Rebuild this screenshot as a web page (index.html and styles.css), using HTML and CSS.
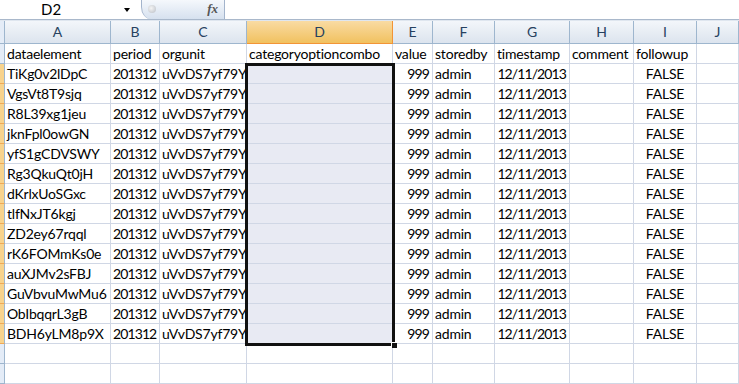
FILE: index.html
```html
<!DOCTYPE html>
<html lang="en">
<head>
    <meta charset="UTF-8">
    <meta name="viewport" content="width=device-width, initial-scale=1.0">
    <link rel="stylesheet" href="styles.css">
</head>
<body>
    <div class="topbar">
        <div class="namebox">D2</div>
        <div class="namebox-arrow"></div>
        <div class="fx-pill">
            <span class="knob"></span>
            <span class="fx">fx</span>
        </div>
        <div class="formula"></div>
    </div>
    <div class="sheet">
        <div class="row head">
            <div class="rh"></div>
            <div class="ch">A</div><div class="ch">B</div><div class="ch">C</div>
            <div class="ch active">D</div><div class="ch">E</div><div class="ch">F</div>
            <div class="ch">G</div><div class="ch">H</div><div class="ch">I</div><div class="ch">J</div>
        </div>
        <div class="row">
            <div class="rh"></div>
            <div class="c">dataelement</div><div class="c">period</div><div class="c">orgunit</div>
            <div class="c">categoryoptioncombo</div><div class="c">value</div><div class="c">storedby</div>
            <div class="c">timestamp</div><div class="c">comment</div><div class="c">followup</div><div class="c"></div>
        </div>
        <div class="row sel">
            <div class="rh"></div>
            <div class="c">TiKg0v2lDpC</div><div class="c r">201312</div><div class="c">uVvDS7yf79Y</div>
            <div class="c d"></div><div class="c r">999</div><div class="c">admin</div>
            <div class="c r">12/11/2013</div><div class="c"></div><div class="c m">FALSE</div><div class="c"></div>
        </div>
        <div class="row sel">
            <div class="rh"></div>
            <div class="c">VgsVt8T9sjq</div><div class="c r">201312</div><div class="c">uVvDS7yf79Y</div>
            <div class="c d"></div><div class="c r">999</div><div class="c">admin</div>
            <div class="c r">12/11/2013</div><div class="c"></div><div class="c m">FALSE</div><div class="c"></div>
        </div>
        <div class="row sel">
            <div class="rh"></div>
            <div class="c">R8L39xg1jeu</div><div class="c r">201312</div><div class="c">uVvDS7yf79Y</div>
            <div class="c d"></div><div class="c r">999</div><div class="c">admin</div>
            <div class="c r">12/11/2013</div><div class="c"></div><div class="c m">FALSE</div><div class="c"></div>
        </div>
        <div class="row sel">
            <div class="rh"></div>
            <div class="c">jknFpl0owGN</div><div class="c r">201312</div><div class="c">uVvDS7yf79Y</div>
            <div class="c d"></div><div class="c r">999</div><div class="c">admin</div>
            <div class="c r">12/11/2013</div><div class="c"></div><div class="c m">FALSE</div><div class="c"></div>
        </div>
        <div class="row sel">
            <div class="rh"></div>
            <div class="c">yfS1gCDVSWY</div><div class="c r">201312</div><div class="c">uVvDS7yf79Y</div>
            <div class="c d"></div><div class="c r">999</div><div class="c">admin</div>
            <div class="c r">12/11/2013</div><div class="c"></div><div class="c m">FALSE</div><div class="c"></div>
        </div>
        <div class="row sel">
            <div class="rh"></div>
            <div class="c">Rg3QkuQt0jH</div><div class="c r">201312</div><div class="c">uVvDS7yf79Y</div>
            <div class="c d"></div><div class="c r">999</div><div class="c">admin</div>
            <div class="c r">12/11/2013</div><div class="c"></div><div class="c m">FALSE</div><div class="c"></div>
        </div>
        <div class="row sel">
            <div class="rh"></div>
            <div class="c">dKrlxUoSGxc</div><div class="c r">201312</div><div class="c">uVvDS7yf79Y</div>
            <div class="c d"></div><div class="c r">999</div><div class="c">admin</div>
            <div class="c r">12/11/2013</div><div class="c"></div><div class="c m">FALSE</div><div class="c"></div>
        </div>
        <div class="row sel">
            <div class="rh"></div>
            <div class="c">tlfNxJT6kgj</div><div class="c r">201312</div><div class="c">uVvDS7yf79Y</div>
            <div class="c d"></div><div class="c r">999</div><div class="c">admin</div>
            <div class="c r">12/11/2013</div><div class="c"></div><div class="c m">FALSE</div><div class="c"></div>
        </div>
        <div class="row sel">
            <div class="rh"></div>
            <div class="c">ZD2ey67rqql</div><div class="c r">201312</div><div class="c">uVvDS7yf79Y</div>
            <div class="c d"></div><div class="c r">999</div><div class="c">admin</div>
            <div class="c r">12/11/2013</div><div class="c"></div><div class="c m">FALSE</div><div class="c"></div>
        </div>
        <div class="row sel">
            <div class="rh"></div>
            <div class="c">rK6FOMmKs0e</div><div class="c r">201312</div><div class="c">uVvDS7yf79Y</div>
            <div class="c d"></div><div class="c r">999</div><div class="c">admin</div>
            <div class="c r">12/11/2013</div><div class="c"></div><div class="c m">FALSE</div><div class="c"></div>
        </div>
        <div class="row sel">
            <div class="rh"></div>
            <div class="c">auXJMv2sFBJ</div><div class="c r">201312</div><div class="c">uVvDS7yf79Y</div>
            <div class="c d"></div><div class="c r">999</div><div class="c">admin</div>
            <div class="c r">12/11/2013</div><div class="c"></div><div class="c m">FALSE</div><div class="c"></div>
        </div>
        <div class="row sel">
            <div class="rh"></div>
            <div class="c">GuVbvuMwMu6</div><div class="c r">201312</div><div class="c">uVvDS7yf79Y</div>
            <div class="c d"></div><div class="c r">999</div><div class="c">admin</div>
            <div class="c r">12/11/2013</div><div class="c"></div><div class="c m">FALSE</div><div class="c"></div>
        </div>
        <div class="row sel">
            <div class="rh"></div>
            <div class="c">ObIbqqrL3gB</div><div class="c r">201312</div><div class="c">uVvDS7yf79Y</div>
            <div class="c d"></div><div class="c r">999</div><div class="c">admin</div>
            <div class="c r">12/11/2013</div><div class="c"></div><div class="c m">FALSE</div><div class="c"></div>
        </div>
        <div class="row sel">
            <div class="rh"></div>
            <div class="c">BDH6yLM8p9X</div><div class="c r">201312</div><div class="c">uVvDS7yf79Y</div>
            <div class="c d"></div><div class="c r">999</div><div class="c">admin</div>
            <div class="c r">12/11/2013</div><div class="c"></div><div class="c m">FALSE</div><div class="c"></div>
        </div>
        <div class="row">
            <div class="rh"></div>
            <div class="c"></div><div class="c"></div><div class="c"></div><div class="c"></div><div class="c"></div>
            <div class="c"></div><div class="c"></div><div class="c"></div><div class="c"></div><div class="c"></div>
        </div>
        <div class="row">
            <div class="rh"></div>
            <div class="c"></div><div class="c"></div><div class="c"></div><div class="c"></div><div class="c"></div>
            <div class="c"></div><div class="c"></div><div class="c"></div><div class="c"></div><div class="c"></div>
        </div>
        <!-- selection outline over D2:D15 -->
        <div class="selection"><span class="fill-handle"></span></div>
    </div>
</body>
</html>
```

FILE: styles.css
```css
body {
    margin: 0;
    padding: 0;
    background-color: white;
    font-family: Lato, "Liberation Sans", sans-serif;
    font-size: 14px;
    color: black;
    overflow: hidden;
    width: 739px;
    height: 384px;
}
.topbar {
    display: flex;
    height: 19px;
    border-bottom: 1px solid #a9b8cb;
    background-color: white;
}
.namebox {
    width: 120px;
    padding-left: 41px;
    box-sizing: border-box;
    line-height: 19px;
    font-size: 15px;
}
.namebox-arrow {
    width: 0;
    height: 0;
    margin: 8px 8px 0 4px;
    border-left: 3.5px solid transparent;
    border-right: 3.5px solid transparent;
    border-top: 4px solid black;
}
.fx-pill {
    width: 84px;
    height: 19px;
    margin-left: 3px;
    box-sizing: border-box;
    border: 1px solid #a3b4cc;
    border-top: none;
    border-bottom: none;
    border-radius: 0 0 0 10px / 0 0 0 12px;
    background: linear-gradient(#f5f8fc, #d6e1ef);
    display: flex;
    align-items: center;
    justify-content: space-between;
    padding: 0 6px;
}
.knob {
    width: 8px;
    height: 8px;
    border-radius: 50%;
    background: radial-gradient(circle at 40% 40%, #f4f4f4, #b9bec6);
    margin-top: -2px;
}
.fx {
    font-family: "Liberation Serif", serif;
    font-style: italic;
    font-weight: bold;
    font-size: 13px;
    color: #555;
    margin-top: -2px;
}
.formula {
    flex: 1;
}
.sheet {
    position: relative;
    border-top: 1px solid #dfe6ef;
}
.row {
    display: grid;
    grid-template-columns: 5px 106px 49px 87px 146px 40px 62px 75px 64px 63px 42px;
    height: 20px;
}
.row > div {
    box-sizing: border-box;
    border-right: 1px solid #d0d7e5;
    border-bottom: 1px solid #d0d7e5;
    white-space: nowrap;
    line-height: 19px;
    padding: 0 2px;
    letter-spacing: -0.2px;
}
.row .rh {
    padding: 0;
    background: #e4ecf7;
    border-right: 1px solid #9eb6ce;
    border-bottom: 1px solid #9eb6ce;
}
.row.sel .rh {
    background: #f8d38d;
    border-bottom-color: #f0a955;
}
.row.head {
    height: 23px;
}
.row.head > div {
    line-height: 22px;
    letter-spacing: 0;
}
.ch {
    text-align: center;
    color: #27415f;
    background: linear-gradient(#f3f6fa, #dce4ee);
    border-right-color: #9eb6ce !important;
    border-bottom-color: #9eb6ce !important;
}
.ch.active {
    background: linear-gradient(#f9dba3, #f1c15f);
    border-bottom-color: #f29436 !important;
    border-right-color: #f29436 !important;
}
.row > .c.r {
    text-align: right;
    letter-spacing: -0.9px;
    padding-right: 3px;
}
.c.m {
    text-align: center;
}
.c.d {
    background: #e8eaf3;
}
.selection {
    position: absolute;
    left: 245px;
    top: 42px;
    width: 150px;
    height: 283px;
    box-sizing: border-box;
    border: 3px solid #111;
}
.fill-handle {
    position: absolute;
    right: -5px;
    bottom: -5px;
    width: 5px;
    height: 5px;
    background: #111;
    border: 1px solid white;
    border-right: none;
    border-bottom: none;
}
```
